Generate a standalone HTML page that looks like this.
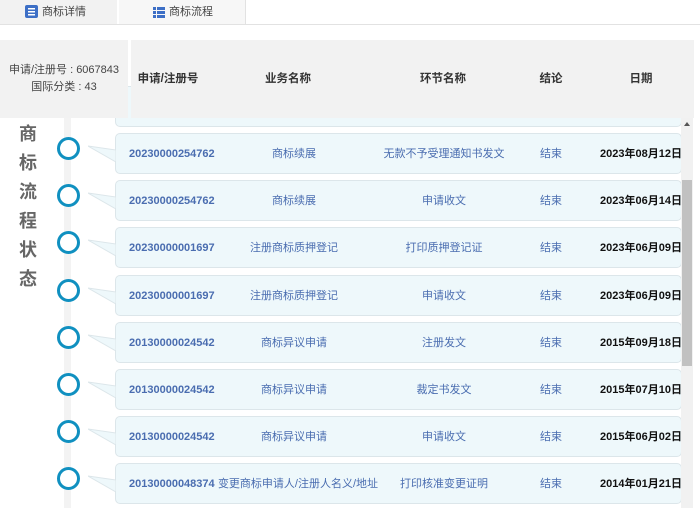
<!DOCTYPE html>
<html><head><meta charset="utf-8"><style>
*{margin:0;padding:0;box-sizing:border-box}
body{width:700px;height:508px;overflow:hidden;background:#fff;font-family:"Liberation Sans","Noto Sans CJK SC",sans-serif;position:relative}
.tabs{position:absolute;left:0;top:0;width:700px;height:25px;border-bottom:1px solid #e2e2e2}
.tab{position:absolute;top:0;height:24px;font-size:11px;color:#444;line-height:24px}
.t1{left:0;width:117px;background:#f2f2f2}
.t2{left:119px;width:127px;background:#f7f7f7;border-right:1px solid #e2e2e2}
.lp{position:absolute;left:0;top:40px;width:128px;height:78px;background:#f2f2f2;font-size:11px;color:#444;text-align:center;line-height:17px;padding-top:22px;z-index:2}
.hd{position:absolute;left:131px;top:40px;width:563px;height:78px;background:#f2f2f2;font-size:11.5px;font-weight:bold;color:#333;z-index:2}
.hd span,.c span{position:absolute;transform:translateX(-50%);white-space:nowrap;line-height:16px}
.vl{position:absolute;left:64px;top:118px;width:7px;height:390px;background:#f3f3f3}
.vt{position:absolute;left:17px;top:120px;width:22px;font-size:18px;font-weight:bold;color:#666;line-height:29px;text-align:center}
.circ{position:absolute;left:57px;width:23px;height:23px;border:3.5px solid #1090c0;border-radius:50%;background:#fff}
.c{position:absolute;left:115px;width:567px;height:41px;background:#eef8fb;border:1px solid #dce6ea;border-radius:5px;font-size:11px;color:#4a6db0}
.c span{top:12px}
.c .n{font-weight:bold;transform:none;left:13px}
.c .d{color:#111;font-weight:bold}
.tri{position:absolute;left:88px}
.sb{position:absolute;left:681px;top:118px;width:12px;height:390px;background:#f1f1f1}
.th{position:absolute;left:682px;top:180px;width:10px;height:186px;background:#c1c1c1}
</style></head><body>
<div class="tabs">
<div class="tab t1"><svg style="position:absolute;left:25px;top:5px" width="13" height="13"><rect width="13" height="13" rx="2" fill="#3d6fc6"/><rect x="3" y="3" width="7" height="1.5" fill="#fff"/><rect x="3" y="6" width="7" height="1.5" fill="#fff"/><rect x="3" y="9" width="7" height="1.5" fill="#fff"/></svg><span style="position:absolute;left:42px">商标详情</span></div>
<div class="tab t2"><svg style="position:absolute;left:34px;top:7px" width="12" height="11" fill="#3d6fc6"><rect width="3" height="3"/><rect x="4" width="8" height="3"/><rect y="4" width="3" height="3"/><rect x="4" y="4" width="8" height="3"/><rect y="8" width="3" height="3"/><rect x="4" y="8" width="8" height="3"/></svg><span style="position:absolute;left:50px">商标流程</span></div>
</div>
<div class="c" style="top:86px"></div>
<div class="vl"></div>
<div class="lp">申请/注册号 : 6067843<br>国际分类 : 43</div>
<div class="hd"><span style="left:37px;top:31px">申请/注册号</span><span style="left:157px;top:31px">业务名称</span><span style="left:312px;top:31px">环节名称</span><span style="left:420px;top:31px">结论</span><span style="left:510px;top:31px">日期</span></div>
<div class="vt">商<br>标<br>流<br>程<br>状<br>态</div>
<div class="c" style="top:133px"><span class="n">20230000254762</span><span style="left:178px">商标续展</span><span style="left:328px">无款不予受理通知书发文</span><span style="left:435px">结束</span><span class="d" style="left:525px">2023年08月12日</span></div>
<div class="c" style="top:180px"><span class="n">20230000254762</span><span style="left:178px">商标续展</span><span style="left:328px">申请收文</span><span style="left:435px">结束</span><span class="d" style="left:525px">2023年06月14日</span></div>
<div class="c" style="top:227px"><span class="n">20230000001697</span><span style="left:178px">注册商标质押登记</span><span style="left:328px">打印质押登记证</span><span style="left:435px">结束</span><span class="d" style="left:525px">2023年06月09日</span></div>
<div class="c" style="top:275px"><span class="n">20230000001697</span><span style="left:178px">注册商标质押登记</span><span style="left:328px">申请收文</span><span style="left:435px">结束</span><span class="d" style="left:525px">2023年06月09日</span></div>
<div class="c" style="top:322px"><span class="n">20130000024542</span><span style="left:178px">商标异议申请</span><span style="left:328px">注册发文</span><span style="left:435px">结束</span><span class="d" style="left:525px">2015年09月18日</span></div>
<div class="c" style="top:369px"><span class="n">20130000024542</span><span style="left:178px">商标异议申请</span><span style="left:328px">裁定书发文</span><span style="left:435px">结束</span><span class="d" style="left:525px">2015年07月10日</span></div>
<div class="c" style="top:416px"><span class="n">20130000024542</span><span style="left:178px">商标异议申请</span><span style="left:328px">申请收文</span><span style="left:435px">结束</span><span class="d" style="left:525px">2015年06月02日</span></div>
<div class="c" style="top:463px"><span class="n">20130000048374</span><span style="left:182px">变更商标申请人/注册人名义/地址</span><span style="left:328px">打印核准变更证明</span><span style="left:435px">结束</span><span class="d" style="left:525px">2014年01月21日</span></div>
<svg class="tri" style="top:145px" width="29" height="18"><polygon points="0,1 28,5 28,17" fill="#eef8fb" stroke="#dce6ea"/><rect x="28" y="4" width="2" height="14" fill="#eef8fb"/></svg>
<svg class="tri" style="top:192px" width="29" height="18"><polygon points="0,1 28,5 28,17" fill="#eef8fb" stroke="#dce6ea"/><rect x="28" y="4" width="2" height="14" fill="#eef8fb"/></svg>
<svg class="tri" style="top:239px" width="29" height="18"><polygon points="0,1 28,5 28,17" fill="#eef8fb" stroke="#dce6ea"/><rect x="28" y="4" width="2" height="14" fill="#eef8fb"/></svg>
<svg class="tri" style="top:287px" width="29" height="18"><polygon points="0,1 28,5 28,17" fill="#eef8fb" stroke="#dce6ea"/><rect x="28" y="4" width="2" height="14" fill="#eef8fb"/></svg>
<svg class="tri" style="top:334px" width="29" height="18"><polygon points="0,1 28,5 28,17" fill="#eef8fb" stroke="#dce6ea"/><rect x="28" y="4" width="2" height="14" fill="#eef8fb"/></svg>
<svg class="tri" style="top:381px" width="29" height="18"><polygon points="0,1 28,5 28,17" fill="#eef8fb" stroke="#dce6ea"/><rect x="28" y="4" width="2" height="14" fill="#eef8fb"/></svg>
<svg class="tri" style="top:428px" width="29" height="18"><polygon points="0,1 28,5 28,17" fill="#eef8fb" stroke="#dce6ea"/><rect x="28" y="4" width="2" height="14" fill="#eef8fb"/></svg>
<svg class="tri" style="top:475px" width="29" height="18"><polygon points="0,1 28,5 28,17" fill="#eef8fb" stroke="#dce6ea"/><rect x="28" y="4" width="2" height="14" fill="#eef8fb"/></svg>
<div class="circ" style="top:137px"></div><div class="circ" style="top:184px"></div><div class="circ" style="top:231px"></div><div class="circ" style="top:279px"></div><div class="circ" style="top:326px"></div><div class="circ" style="top:373px"></div><div class="circ" style="top:420px"></div><div class="circ" style="top:467px"></div>
<div class="sb"></div><div class="th"></div>
<div style="position:absolute;left:684px;top:122px;width:0;height:0;border-left:3px solid transparent;border-right:3px solid transparent;border-bottom:4px solid #555"></div>
</body></html>
